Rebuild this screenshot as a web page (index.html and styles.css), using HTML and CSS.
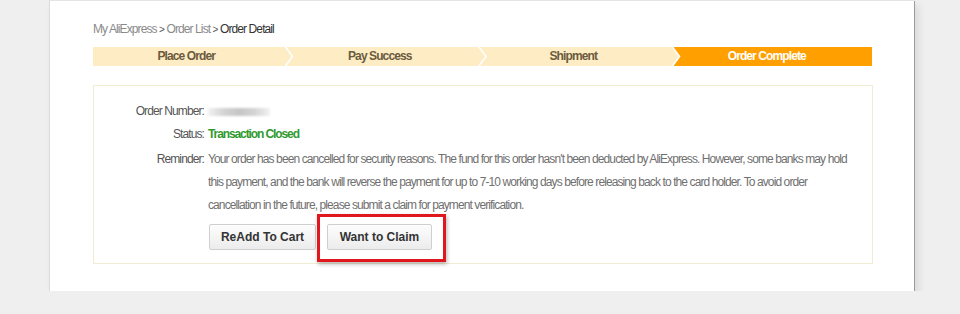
FILE: index.html
```html
<!DOCTYPE html>
<html lang="en">
<head>
    <meta charset="UTF-8">
    <meta name="viewport" content="width=device-width, initial-scale=1.0">
    <title>Order Detail</title>
    <link rel="stylesheet" href="styles.css">
</head>
<body>
    <div class="panel">
        <div class="crumbs">
            <a href="#">My AliExpress</a> <span class="sep">&gt;</span>
            <a href="#">Order List</a> <span class="sep">&gt;</span>
            <span class="current">Order Detail</span>
        </div>

        <ol class="steps">
            <li>Place Order</li>
            <li>Pay Success</li>
            <li>Shipment</li>
            <li class="done">Order Complete</li>
        </ol>

        <div class="detail">
            <dl class="info">
                <dt>Order Number:</dt>
                <dd><span class="masked"></span></dd>

                <dt>Status:</dt>
                <dd class="status">Transaction Closed</dd>

                <dt class="gap">Reminder:</dt>
                <dd class="gap note">Your order has been cancelled for security reasons. The fund for this order hasn't been deducted by AliExpress. However, some banks may hold this payment, and the bank will reverse the payment for up to 7-10 working days before releasing back to the card holder. To avoid order cancellation in the future, please submit a claim for payment verification.</dd>

                <dd class="actions">
                    <button type="button" class="btn btn-cart">ReAdd To Cart</button>
                    <span class="highlight">
                        <button type="button" class="btn btn-claim">Want to Claim</button>
                    </span>
                </dd>
            </dl>
        </div>
    </div>
</body>
</html>
```

FILE: styles.css
```css
body {
    margin: 0;
    background: #efefef;
    font-family: "Liberation Sans", Arial, sans-serif;
    font-size: 12px;
    letter-spacing: -0.9px;
    color: #666;
}
.panel {
    width: 780px;
    margin-left: 49px;
    padding: 20px 41px 27px 43px;
    background: #fff;
    border-top: 1px solid #e4e4e4;
    border-left: 1px solid #dcdcdc;
    box-shadow: 1px 1px 0 #9a9a9a, 4px 5px 8px rgba(0,0,0,0.1);
}
.crumbs {
    line-height: 16px;
    color: #444;
}
.crumbs a {
    color: #8a8a8a;
    text-decoration: none;
}
.crumbs .sep {
    color: #555;
    font-size: 10px;
}
.crumbs .current {
    color: #333;
}
.steps {
    display: flex;
    list-style: none;
    margin: 9px 1px 0 0;
    padding: 0;
    height: 19px;
}
.steps li {
    flex: 1;
    padding-right: 12px;
    background: #fdecc4;
    color: #6b5b3e;
    font-weight: bold;
    text-align: center;
    line-height: 19px;
    clip-path: polygon(0 0, calc(100% - 7px) 0, 100% 50%, calc(100% - 7px) 100%, 0 100%, 7px 50%);
}
.steps li:first-child {
    clip-path: polygon(0 0, calc(100% - 7px) 0, 100% 50%, calc(100% - 7px) 100%, 0 100%);
}
.steps li + li {
    margin-left: -5px;
}
.steps li.done {
    background: #ffa000;
    color: #fff;
    clip-path: polygon(0 0, 100% 0, 100% 100%, 0 100%, 7px 50%);
}
.detail {
    margin-top: 19px;
    padding: 14px 14px 13px 0;
    border: 1px solid #f2ecd2;
}
.info {
    display: grid;
    grid-template-columns: 110px 1fr;
    column-gap: 4px;
    margin: 0;
    line-height: 23px;
}
.info dt {
    text-align: right;
    color: #555;
}
.info dd {
    margin: 0;
}
.info .gap {
    margin-top: 2px;
}
.masked {
    display: inline-block;
    width: 62px;
    height: 8px;
    vertical-align: middle;
    background: linear-gradient(to right, #f2f2f2, #d4d4d4 25%, #c6c6c6 50%, #d4d4d4 75%, #f2f2f2);
    filter: blur(1px);
}
.status {
    color: #2f9a2f;
    font-weight: bold;
    letter-spacing: -1.1px;
}
.note {
    color: #707070;
}
.actions {
    grid-column: 2;
    display: flex;
    gap: 11px;
    margin-top: 7px !important;
    padding-left: 1px;
}
.btn {
    height: 26px;
    padding: 0;
    font-family: "Liberation Sans", Arial, sans-serif;
    font-size: 12px;
    font-weight: bold;
    letter-spacing: 0;
    color: #333;
    border: 1px solid #cfcfcf;
    border-radius: 2px;
    background: linear-gradient(#fdfdfd, #ececec);
    cursor: pointer;
}
.btn-cart {
    width: 107px;
}
.btn-claim {
    width: 105px;
}
.highlight {
    position: relative;
    display: inline-block;
    height: 26px;
}
.highlight::after {
    content: "";
    position: absolute;
    top: -10px;
    right: -14px;
    bottom: -12px;
    left: -10px;
    border: 3px solid #e0171c;
    box-shadow: 1px 2px 4px rgba(0,0,0,0.3);
    pointer-events: none;
}
```
